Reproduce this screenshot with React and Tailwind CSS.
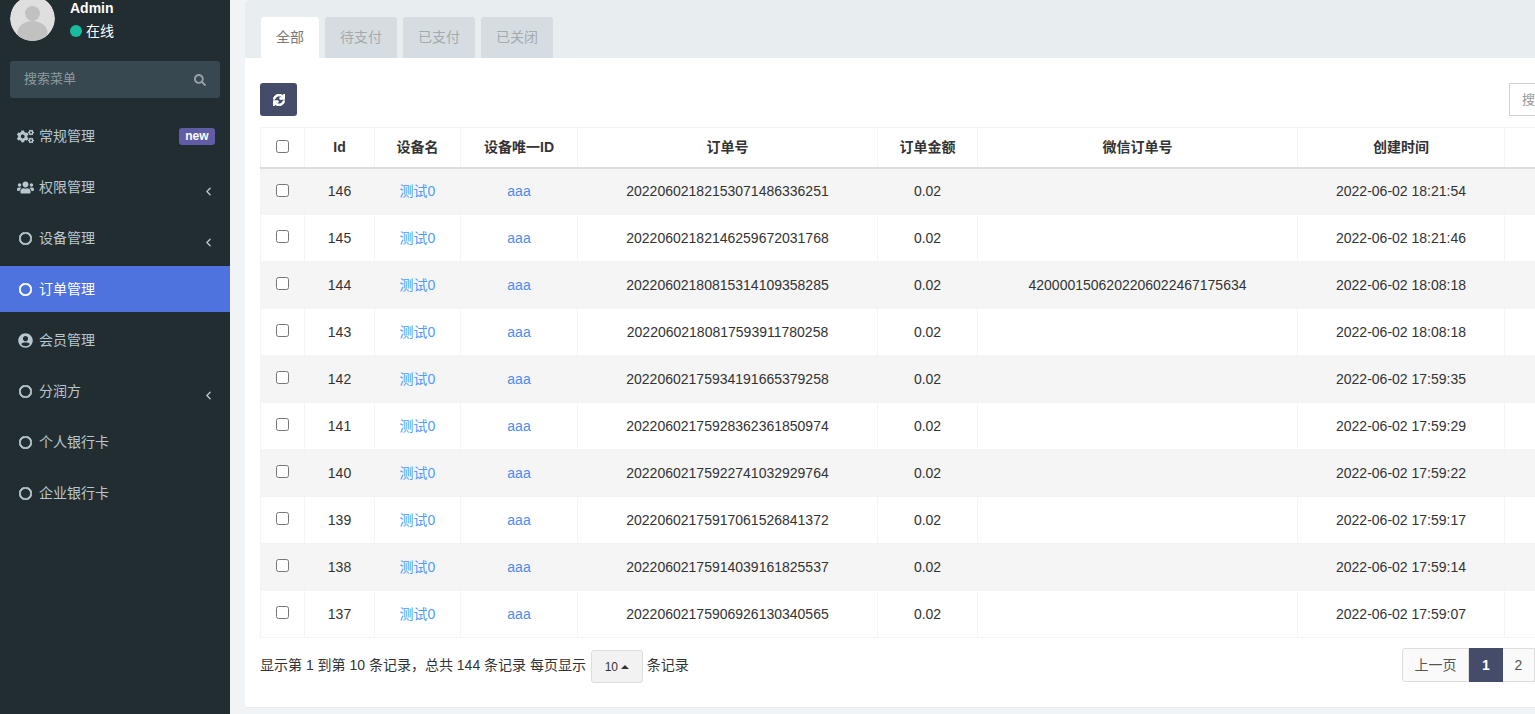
import React from "react";
import { FaCogs, FaUsers, FaRegCircle, FaUserCircle, FaSync, FaSearch } from "react-icons/fa";
import { ChevronLeft } from "lucide-react";

const rows = [
  ["146", "20220602182153071486336251", "", "2022-06-02 18:21:54"],
  ["145", "20220602182146259672031768", "", "2022-06-02 18:21:46"],
  ["144", "20220602180815314109358285", "4200001506202206022467175634", "2022-06-02 18:08:18"],
  ["143", "20220602180817593911780258", "", "2022-06-02 18:08:18"],
  ["142", "20220602175934191665379258", "", "2022-06-02 17:59:35"],
  ["141", "20220602175928362361850974", "", "2022-06-02 17:59:29"],
  ["140", "20220602175922741032929764", "", "2022-06-02 17:59:22"],
  ["139", "20220602175917061526841372", "", "2022-06-02 17:59:17"],
  ["138", "20220602175914039161825537", "", "2022-06-02 17:59:14"],
  ["137", "20220602175906926130340565", "", "2022-06-02 17:59:07"],
];

const menu = [
  { label: "常规管理", icon: FaCogs, badge: true },
  { label: "权限管理", icon: FaUsers, arrow: true },
  { label: "设备管理", icon: FaRegCircle, arrow: true },
  { label: "订单管理", icon: FaRegCircle, active: true },
  { label: "会员管理", icon: FaUserCircle },
  { label: "分润方", icon: FaRegCircle, arrow: true },
  { label: "个人银行卡", icon: FaRegCircle },
  { label: "企业银行卡", icon: FaRegCircle },
];

const cols = [44, 70, 86, 117, 300, 100, 320, 207, 120];
const heads = ["Id", "设备名", "设备唯一ID", "订单号", "订单金额", "微信订单号", "创建时间", ""];

function Sidebar() {
  return (
    <aside className="w-[230px] shrink-0 h-[714px] bg-[#222d32] overflow-hidden">
      <div className="flex pl-[10px] -mt-[4px] h-[45px]">
        <svg width="45" height="45" viewBox="0 0 45 45" className="rounded-full shrink-0">
          <circle cx="22.5" cy="22.5" r="22.5" fill="#dfdfdf" />
          <circle cx="22.5" cy="17.5" r="7.5" fill="#c1c1c1" />
          <ellipse cx="22.5" cy="37" rx="15" ry="12" fill="#c1c1c1" />
        </svg>
        <div className="ml-[15px] text-white text-[14px] leading-5">
          <div className="font-bold h-[21px] mt-[2px]">Admin</div>
          <div className="flex items-center mt-[2px] text-[14px]">
            <span className="w-3 h-3 rounded-full bg-[#18bc9c] mr-1" />
            在线
          </div>
        </div>
      </div>
      <div className="mx-[10px] mt-[20px] h-[37px] bg-[#374850] rounded-[3px] flex items-center justify-between pl-[14px] pr-[14px] text-[13px] text-[#8f9a9f]">
        <span className="-mt-[1px]">搜索菜单</span>
        <FaSearch className="text-[12px] text-[#97a2a7]" />
      </div>
      <nav className="mt-[15px] flex flex-col gap-[5px]">
        {menu.map((m) => {
          const Icon = m.icon;
          return (
            <div
              key={m.label}
              className={`h-[46px] flex items-center pl-[17px] pr-[15px] text-[14px] ${m.active ? "bg-[#4e73df] text-white" : "text-[#b8c7ce]"}`}
            >
              <span className="w-[22px] shrink-0 flex">
                <Icon className={m.icon === FaRegCircle ? "text-[13px] ml-[2px] stroke-[36]" : m.icon === FaUserCircle ? "text-[15px] ml-[1px]" : "text-[17px]"} />
              </span>
              <span>{m.label}</span>
              {m.badge && (
                <span className="ml-auto bg-[#605ca8] text-white text-[12px] font-bold leading-none px-[6.5px] py-[2.5px] rounded-[3px]">new</span>
              )}
              {m.arrow && <ChevronLeft size={13} strokeWidth={2.5} className="ml-auto mt-[9px]" />}
            </div>
          );
        })}
      </nav>
    </aside>
  );
}

function Tabs() {
  const inactive = ["待支付", "已支付", "已关闭"];
  return (
    <div className="h-[58px] bg-[#e8edf0] flex items-end gap-[6px] pl-[16px] text-[14px] rounded-t-[3px]">
      <div className="w-[58px] h-[41px] bg-white text-[#777] rounded-t-[3px] flex items-center justify-center">全部</div>
      {inactive.map((t) => (
        <div key={t} className="w-[72px] h-[41px] bg-[#d6dde2] text-[#a3abad] rounded-t-[3px] flex items-center justify-center">{t}</div>
      ))}
    </div>
  );
}

function OrderTable() {
  return (
    <table className="table-fixed border-collapse w-[1364px] text-[14px] text-[#333]">
      <colgroup>
        {cols.map((c, i) => <col key={i} style={{ width: c }} />)}
      </colgroup>
      <thead>
        <tr className="h-[40px] border-b-2 border-b-[#dddddd]">
          <th className="border border-[#f4f4f4] border-b-[#dddddd] text-center font-normal align-middle pb-[4px]">
            <input type="checkbox" className="align-middle" />
          </th>
          {heads.map((h, i) => (
            <th key={i} className="border border-[#f4f4f4] border-b-[#dddddd] text-center font-bold">{h}</th>
          ))}
        </tr>
      </thead>
      <tbody>
        {rows.map((r, i) => (
          <tr key={r[0]} className={`h-[47px] ${i % 2 === 0 ? "bg-[#f5f5f5]" : "bg-white"}`}>
            <td className="border border-[#f4f4f4] text-center pb-[4px]"><input type="checkbox" className="align-middle" /></td>
            <td className="border border-[#f4f4f4] text-center">{r[0]}</td>
            <td className="border border-[#f4f4f4] text-center text-[#4e9cff]">测试0</td>
            <td className="border border-[#f4f4f4] text-center text-[#4e8cf0]">aaa</td>
            <td className="border border-[#f4f4f4] text-center">{r[1]}</td>
            <td className="border border-[#f4f4f4] text-center">0.02</td>
            <td className="border border-[#f4f4f4] text-center">{r[2]}</td>
            <td className="border border-[#f4f4f4] text-center">{r[3]}</td>
            <td className="border border-[#f4f4f4]" />
          </tr>
        ))}
      </tbody>
    </table>
  );
}

export default function App() {
  return (
    <div className="w-[1535px] h-[714px] overflow-hidden flex bg-[#f1f4f6]" style={{ fontFamily: '"Liberation Sans", "Noto Sans CJK SC", sans-serif' }}>
      <Sidebar />
      <main className="ml-[15px] w-[1400px] shrink-0 h-[708px] bg-white rounded-[3px] border-b border-b-[#e6eaed] overflow-hidden">
        <Tabs />
        <div className="px-[15px]">
          <div className="h-[69px] pt-[25px] flex">
            <button className="w-[37px] h-[33px] shrink-0 bg-[#444c69] rounded-[3px] text-white flex items-center justify-center">
              <FaSync className="text-[12px] stroke-[40]" />
            </button>
            <div className="ml-[1212px] w-[120px] h-[33px] border border-[#ccd0d8] pl-[12px] text-[13px] text-[#999] leading-[31px] shrink-0">搜索</div>
          </div>
          <OrderTable />
          <div className="flex items-start mt-[11px] text-[14px] text-[#333] w-[1275px]">
            <div className="flex items-center h-[35px]">
              <span className="whitespace-pre -mt-[2px]">显示第 1 到第 10 条记录，总共 144 条记录 每页显示 </span>
              <span className="ml-[1px] w-[52px] h-[33px] bg-[#f2f2f2] border border-[#dddddd] rounded-[3px] text-[12px] flex items-center justify-center gap-[3px]">
                10
                <span className="w-0 h-0 border-x-[4px] border-x-transparent border-b-[4px] border-b-[#333]" />
              </span>
              <span className="ml-[4px] -mt-[2px]">条记录</span>
            </div>
            <div className="ml-auto -mt-[1px] flex h-[34px] text-[#555] shrink-0">
              <span className="w-[67px] bg-[#fafafa] border border-[#dddddd] rounded-l-[3px] flex items-center justify-center">上一页</span>
              <span className="w-[34px] bg-[#444c69] text-white font-bold flex items-center justify-center">1</span>
              <span className="w-[32px] bg-[#fafafa] border border-[#dddddd] border-l-0 flex items-center justify-center">2</span>
            </div>
          </div>
        </div>
      </main>
    </div>
  );
}
